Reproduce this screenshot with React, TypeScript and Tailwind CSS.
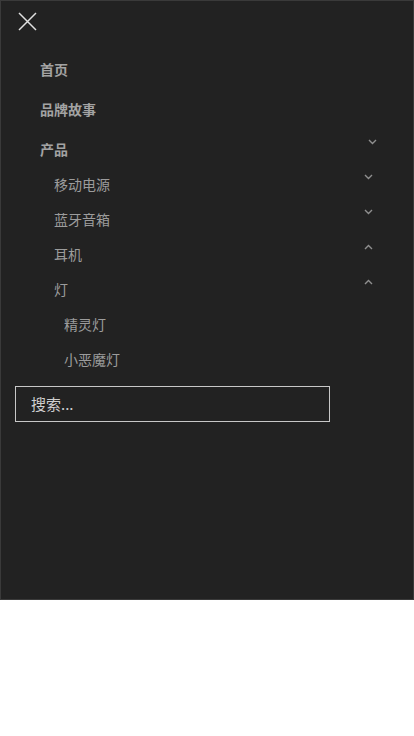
const font = { fontFamily: '"Noto Sans CJK SC", "Noto Sans", sans-serif' };

function Chevron({ up = false }: { up?: boolean }) {
  return (
    <svg width="9" height="6" viewBox="0 0 9 6" className="-translate-y-2 text-[#8f8f8f]">
      <polyline
        points={up ? "1,5 4.5,1.5 8,5" : "1,1 4.5,4.5 8,1"}
        fill="none"
        stroke="currentColor"
        strokeWidth="1.4"
      />
    </svg>
  );
}

function Row({
  label,
  indent,
  height,
  bold,
  chevron,
  pr,
}: {
  label: string;
  indent: string;
  height: string;
  bold?: boolean;
  chevron?: "up" | "down";
  pr: string;
}) {
  return (
    <li className={`flex items-center justify-between ${height} ${indent} ${pr}`}>
      <span className={bold ? "text-[14px] font-bold text-[#a3a3a3]" : "text-[14px] text-[#9c9c9c]"}>
        {label}
      </span>
      {chevron && <Chevron up={chevron === "up"} />}
    </li>
  );
}

export default function App() {
  return (
    <div className="min-h-[736px] bg-white" style={font}>
      <div className="h-[600px] w-full bg-[#222222] border border-[#3a3a3a]">
        <div className="pt-[11px] pl-[17px]">
          <svg width="19" height="19" viewBox="0 0 19 19">
            <path d="M1 1 L18 18 M18 1 L1 18" stroke="#e0e0e0" strokeWidth="1.5" />
          </svg>
        </div>
        <ul className="mt-[18px]">
          <Row label="首页" indent="pl-[39px]" height="h-10" bold pr="pr-[36px]" />
          <Row label="品牌故事" indent="pl-[39px]" height="h-10" bold pr="pr-[36px]" />
          <Row label="产品" indent="pl-[39px] pt-[3px]" height="h-[38px]" bold chevron="down" pr="pr-[36px]" />
          <Row label="移动电源" indent="pl-[53px]" height="h-[35px]" chevron="down" pr="pr-[40px]" />
          <Row label="蓝牙音箱" indent="pl-[53px]" height="h-[35px]" chevron="down" pr="pr-[40px]" />
          <Row label="耳机" indent="pl-[53px]" height="h-[35px]" chevron="up" pr="pr-[40px]" />
          <Row label="灯" indent="pl-[53px]" height="h-[35px]" chevron="up" pr="pr-[40px]" />
          <Row label="精灵灯" indent="pl-[63px]" height="h-[35px]" pr="pr-[40px]" />
          <Row label="小恶魔灯" indent="pl-[63px]" height="h-[35px]" pr="pr-[40px]" />
        </ul>
        <div className="mt-[9px] pl-[14px]">
          <div className="flex h-[36px] w-[315px] items-center border border-[#c8c8c8] pl-[15px] text-[15px] text-[#cfcfcf]">
            搜索...
          </div>
        </div>
      </div>
    </div>
  );
}
